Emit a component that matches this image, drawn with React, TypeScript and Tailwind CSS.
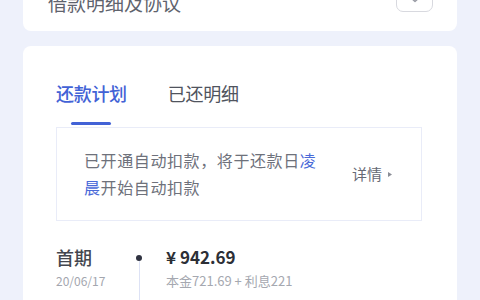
import React from "react";

const font = { fontFamily: '"Noto Sans CJK SC", "Noto Sans", sans-serif' };

const Chevron = () => (
  <svg width="12" height="8" viewBox="0 0 12 8" fill="none">
    <path d="M2 2l4 3.5L10 2" stroke="#9a9ca5" strokeWidth="1.4" strokeLinecap="round" strokeLinejoin="round" />
  </svg>
);

const App = () => {
  return (
    <div
      className="w-[480px] h-[300px] overflow-hidden bg-[#eef1fb] px-[23px]"
      style={font}
    >
      <div className="-mt-[9px] bg-white rounded-b-[8px] pl-[25px] pr-[24px] pb-[16px] flex items-center justify-between">
        <span className="text-[19px] leading-[24px] text-[#5f636d]">借款明细及协议</span>
        <div className="w-[37px] h-[24px] -mt-[6px] border border-[#d8d9df] rounded-[7px] flex items-center justify-center">
          <Chevron />
        </div>
      </div>

      <div className="mt-[15px] bg-white rounded-[8px] pt-[35px] pl-[33px] pr-[35px] h-[300px]">
        <div className="flex gap-[41px]">
          <div className="flex flex-col items-center">
            <span className="text-[18px] leading-[24px] text-[#4262d6] font-medium tracking-[-0.3px]">还款计划</span>
            <div className="mt-[17px] w-[40px] h-[3px] bg-[#4262d6] rounded-full" />
          </div>
          <span className="text-[18px] leading-[24px] text-[#50545e] tracking-[-0.3px]">已还明细</span>
        </div>

        <div className="mt-[2px] h-[94px] border border-[#e9ecf8] flex items-center justify-between pl-[27px] pr-[29px]">
          <p className="w-[238px] text-[16px] leading-[27px] text-[#6e717b] tracking-[0.6px]">
            已开通自动扣款，将于还款日<span className="text-[#4a6ad8]">凌晨</span>开始自动扣款
          </p>
          <div className="flex items-center gap-[6px] text-[15px] leading-[20px] text-[#666a75]">
            <span>详情</span>
            <svg width="4" height="5" viewBox="0 0 4 5">
              <path d="M0 0l4 2.5L0 5z" fill="#8a8d96" />
            </svg>
          </div>
        </div>

        <div className="mt-[24px] flex">
          <div className="w-[80px]">
            <div className="text-[18px] leading-[24px] text-[#44474f] font-medium">首期</div>
            <div className="mt-[4px] text-[12px] leading-[16px] text-[#a3a6ae]">20/06/17</div>
          </div>
          <div className="w-[6px] flex flex-col items-center pt-[10px]">
            <div className="w-[6px] h-[6px] rounded-full bg-[#2f3240]" />
            <div className="w-[1px] h-[60px] bg-[#dde2f5]" />
          </div>
          <div className="ml-[24px]">
            <div className="text-[17px] leading-[24px] text-[#2c2f36] font-semibold">¥ 942.69</div>
            <div className="mt-[4px] text-[13px] leading-[16px] text-[#a5a8b0]">本金721.69 + 利息221</div>
          </div>
        </div>
      </div>
    </div>
  );
};

export default App;
